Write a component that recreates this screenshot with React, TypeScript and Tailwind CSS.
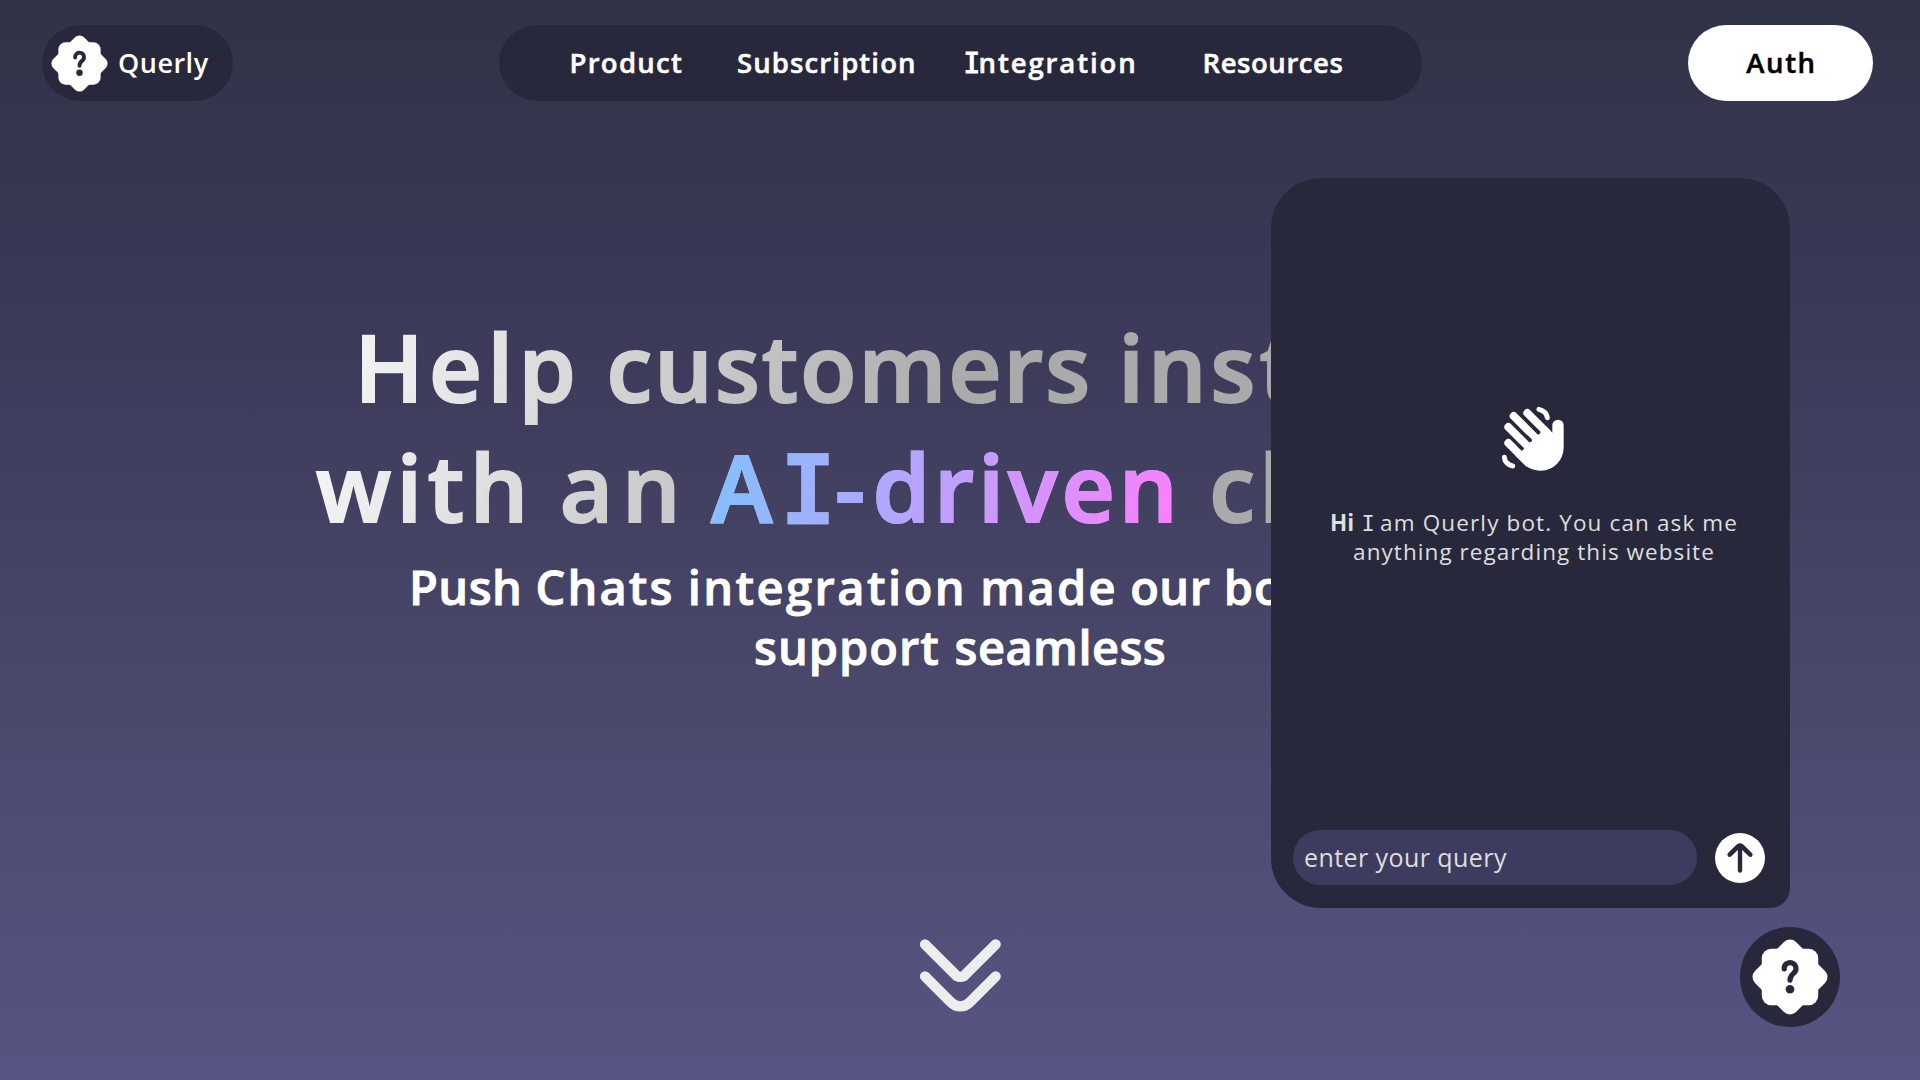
import { Fragment } from "react";

const NAV = [
  { label: "Product", cls: "w-[167.5px] tracking-[1.28px]" },
  { label: "Subscription", cls: "w-[226.5px] tracking-[1.12px]" },
  { label: "Integration", cls: "w-[239px] tracking-[1.9px]" },
  { label: "Resources", cls: "tracking-[0.57px]" },
];

type Word = [text: string, cls: string];

const SUB_LINE_1: Word[] = [
  ["Push", "tracking-[0.46px]"],
  ["Chats", "tracking-[2.1px] ml-[1px]"],
  ["integration", "tracking-[2.45px] ml-[1px]"],
  ["made", "tracking-[2.3px] ml-[1px]"],
  ["our", "tracking-[0.48px]"],
  ["bot", "tracking-[1px] ml-[1px]"],
  ["customer", "tracking-[1px]"],
];

const SUB_LINE_2: Word[] = [
  ["support", "tracking-[1px]"],
  ["seamless", "tracking-[0.45px] ml-[2.5px]"],
];

function Words({ items }: { items: Word[] }) {
  return (
    <>
      {items.map(([text, cls], i) => (
        <Fragment key={text}>
          {i > 0 && " "}
          <span className={cls}>{text}</span>
        </Fragment>
      ))}
    </>
  );
}

/* Capital I with slab serifs */
function SlabI({ className }: { className: string }) {
  return <span className={"font-['DejaVu_Sans_Mono'] leading-[0] " + className}>I</span>;
}

function Badge({ size }: { size: number }) {
  return (
    <svg width={size} height={size} viewBox="-38 -38 76 76" className="shrink-0">
      <g fill="#fff">
        <rect x="-28.2" y="-28.2" width="56.4" height="56.4" rx="9.5" />
        <rect x="-29" y="-29" width="58" height="58" rx="8.5" transform="rotate(45)" />
      </g>
      <path
        d="M-5.8 -8A5.9 5.9 0 1 1 3.6 -3.8C1.2 -1.9 0 -0.6 0 3.1"
        fill="none"
        stroke="#28283d"
        strokeWidth="5.2"
        strokeLinecap="round"
      />
      <circle cx="0" cy="12.2" r="4.3" fill="#28283d" />
    </svg>
  );
}

function WaveIcon() {
  return (
    <svg width="120" height="110" viewBox="0 0 360 330">
      <g stroke="#fff" strokeLinecap="round" fill="none">
        <path d="M172 99L232 159M131 108L206 183M115 141L190 216M115 189L175 249" strokeWidth="24" />
        <path d="M207 88C220 91 230 101 232 113M103 232C104 246 116 256 128 258" strokeWidth="15" />
      </g>
      <path
        d="M247 158L228 139L138 229L165 255C178 267 194 272 212 272A69 69 0 0 0 281 203V136A17 17 0 0 0 247 136Z"
        fill="#fff"
      />
      <path
        d="M196 148L206 158M171 171L181 181M146 196L156 206"
        stroke="#28283d"
        strokeWidth="10"
        strokeLinecap="round"
      />
    </svg>
  );
}

function ChevronsDown() {
  return (
    <svg width="140" height="120" viewBox="0 0 420 360">
      <g fill="none" stroke="#ededed" strokeWidth="31" strokeLinecap="round">
        <path d="M105 103L200 198Q211 203 222 198L317 103" />
        <path d="M105 199L183 277Q195 289 211 289Q227 289 239 277L317 199" />
      </g>
    </svg>
  );
}

function SendIcon() {
  return (
    <svg width="50" height="50" viewBox="-25 -25 50 50">
      <g fill="none" stroke="#28283d" strokeLinecap="round" strokeLinejoin="round">
        <path d="M0 -11V12.6" strokeWidth="4.4" />
        <path d="M-10.3 -3.4L-2 -11.5Q0 -13.2 2 -11.5L10.3 -3.4" strokeWidth="4.6" />
      </g>
    </svg>
  );
}

function Header() {
  return (
    <header className="flex h-[76px] pl-[42px] font-semibold text-white">
      <div className="flex w-[191px] items-center rounded-[38px] bg-[#28283d] pl-[9px]">
        <Badge size={57} />
        <span className="ml-[10px] text-[27px] tracking-[0.5px]">Querly</span>
      </div>
      <nav className="ml-[266px] flex w-[923px] items-center rounded-[38px] bg-[#28283d] pl-[70.5px] text-[27.5px] [-webkit-text-stroke:0.5px_white]">
        {NAV.map(({ label, cls }) => (
          <a key={label} className={"whitespace-nowrap " + cls}>
            {label.startsWith("I") ? (
              <>
                <SlabI className="font-normal tracking-[-1.5px] [-webkit-text-stroke:1.2px_white]" />
                {label.slice(1)}
              </>
            ) : (
              label
            )}
          </a>
        ))}
      </nav>
      <button className="ml-[266px] w-[185px] rounded-[38px] bg-white pl-[2px] text-[27.5px] tracking-[1.6px] text-black [-webkit-text-stroke:0.5px_black]">
        Auth
      </button>
    </header>
  );
}

function Hero() {
  return (
    <section className="mx-auto mt-[206px] w-[1440px] font-semibold whitespace-nowrap">
      <h1 className="bg-[linear-gradient(105deg,#fcfcfc_3%,#aaaaaa_50%)] bg-clip-text text-[92px] leading-[120px] text-transparent [-webkit-text-stroke:2.2px_transparent]">
        <div className="pl-[114.5px]">
          <span className="tracking-[5.4px]">Help</span>{" "}
          <span className="ml-[1.5px] tracking-[2.1px]">customers</span>{" "}
          <span className="ml-[2px] tracking-[4.2px]">instantly</span>
        </div>
        <div className="pl-[76px]">
          <span className="tracking-[5.6px]">with</span> <span className="ml-[2px] tracking-[8.8px]">an</span>{" "}
          <span className="ml-[-2px] bg-[linear-gradient(100deg,#84bfff_2%,#fa80ff_98%)] bg-clip-text">
            <span className="tracking-[9px]">A</span>
            <SlabI className="text-[90px] font-normal [-webkit-text-stroke:4.5px_transparent]" />
            <span className="tracking-[8px]">-</span>
            <span className="tracking-[4.3px]">driven</span>
          </span>{" "}
          <span className="ml-[3.5px] tracking-[4.45px]">chatbot</span>
        </div>
      </h1>
      <div className="mt-[10px] text-[47px] leading-[60px] text-white [-webkit-text-stroke:0.9px_white]">
        <div className="pl-[169px]">
          <Words items={SUB_LINE_1} />
        </div>
        <div className="pl-[514px]">
          <Words items={SUB_LINE_2} />
        </div>
      </div>
    </section>
  );
}

function ChatPanel() {
  return (
    <aside className="absolute top-[178px] left-[1271px] flex h-[730px] w-[519px] flex-col items-center rounded-[50px] rounded-br-[20px] bg-[#28283d] text-[#dedede]">
      <div className="mt-[202px] ml-[-1px]">
        <WaveIcon />
      </div>
      <p className="mt-[17.5px] pl-[7px] text-center text-[22.5px] leading-[29px] whitespace-nowrap">
        <span className="tracking-[1.13px]">
          <b className="tracking-[0.2px]">Hi</b> <SlabI className="text-[22px] tracking-[-1.5px]" /> am Querly bot. You can
          ask me
        </span>
        <br />
        <span className="tracking-[1.06px]">anything regarding this website</span>
      </p>
      <div className="mt-auto mb-[23px] flex w-full items-center pl-[22px]">
        <div className="flex h-[55px] w-[404px] items-center rounded-[27.5px] bg-[#3d3c5e] pt-px pl-[11px] text-[25px] tracking-[0.43px]">
          enter your query
        </div>
        <button className="ml-[18px] size-[50px] rounded-full bg-white">
          <SendIcon />
        </button>
      </div>
    </aside>
  );
}

export default function App() {
  return (
    <main className="relative h-[1080px] w-[1920px] overflow-hidden bg-[linear-gradient(180deg,#313247_0%,#3c3b5a_33%,#49486b_63%,#565583_100%)] pt-[25px] font-['Open_Sans',sans-serif]">
      <Header />
      <Hero />
      <div className="mt-[233px] flex justify-center">
        <ChevronsDown />
      </div>
      <ChatPanel />
      <div className="absolute top-[927px] left-[1740px] flex size-[100px] items-center justify-center rounded-full bg-[#28283d]">
        <Badge size={76} />
      </div>
    </main>
  );
}
